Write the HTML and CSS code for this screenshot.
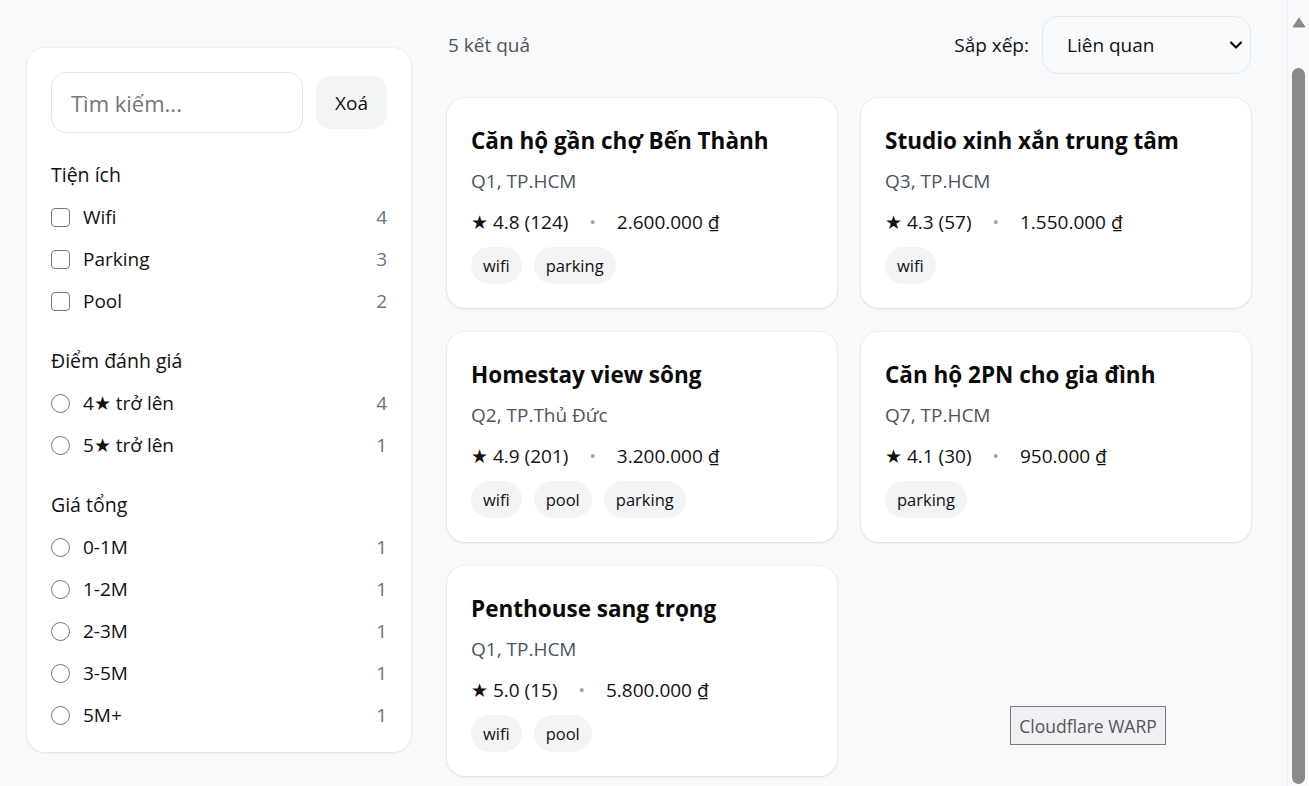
FILE: index.html
```html
<!DOCTYPE html>
<html lang="vi">
<head>
<meta charset="utf-8">
<title>Tìm chỗ ở</title>
<link rel="stylesheet" href="styles.css">
</head>
<body>
<div class="page">
  <aside class="sidebar">
    <div class="search-row">
      <input class="search" type="text" placeholder="Tìm kiếm...">
      <button class="clear">Xoá</button>
    </div>
    <section class="group">
      <h3 class="group-title">Tiện ích</h3>
      <label class="opt"><span class="box"></span><span class="opt-label">Wifi</span><span class="count">4</span></label>
      <label class="opt"><span class="box"></span><span class="opt-label">Parking</span><span class="count">3</span></label>
      <label class="opt"><span class="box"></span><span class="opt-label">Pool</span><span class="count">2</span></label>
    </section>
    <section class="group">
      <h3 class="group-title">Điểm đánh giá</h3>
      <label class="opt"><span class="radio"></span><span class="opt-label">4★ trở lên</span><span class="count">4</span></label>
      <label class="opt"><span class="radio"></span><span class="opt-label">5★ trở lên</span><span class="count">1</span></label>
    </section>
    <section class="group">
      <h3 class="group-title">Giá tổng</h3>
      <label class="opt"><span class="radio"></span><span class="opt-label">0-1M</span><span class="count">1</span></label>
      <label class="opt"><span class="radio"></span><span class="opt-label">1-2M</span><span class="count">1</span></label>
      <label class="opt"><span class="radio"></span><span class="opt-label">2-3M</span><span class="count">1</span></label>
      <label class="opt"><span class="radio"></span><span class="opt-label">3-5M</span><span class="count">1</span></label>
      <label class="opt"><span class="radio"></span><span class="opt-label">5M+</span><span class="count">1</span></label>
    </section>
  </aside>

  <main class="main">
    <div class="toolbar">
      <span class="result-count">5 kết quả</span>
      <div class="sort">
        <span class="sort-label">Sắp xếp:</span>
        <div class="select">
          <span>Liên quan</span>
          <svg class="chev" width="14" height="10" viewBox="0 0 14 10"><path d="M2 2.5 L7 7.5 L12 2.5" fill="none" stroke="#111" stroke-width="2.2" stroke-linecap="round" stroke-linejoin="round"/></svg>
        </div>
      </div>
    </div>

    <div class="grid">
      <article class="card">
        <h2 class="title">Căn hộ gần chợ Bến Thành</h2>
        <div class="loc">Q1, TP.HCM</div>
        <div class="meta"><span>★ 4.8 (124)</span><span class="dot">•</span><span>2.600.000 ₫</span></div>
        <div class="tags"><span class="tag">wifi</span><span class="tag">parking</span></div>
      </article>
      <article class="card">
        <h2 class="title">Studio xinh xắn trung tâm</h2>
        <div class="loc">Q3, TP.HCM</div>
        <div class="meta"><span>★ 4.3 (57)</span><span class="dot">•</span><span>1.550.000 ₫</span></div>
        <div class="tags"><span class="tag">wifi</span></div>
      </article>
      <article class="card">
        <h2 class="title">Homestay view sông</h2>
        <div class="loc">Q2, TP.Thủ Đức</div>
        <div class="meta"><span>★ 4.9 (201)</span><span class="dot">•</span><span>3.200.000 ₫</span></div>
        <div class="tags"><span class="tag">wifi</span><span class="tag">pool</span><span class="tag">parking</span></div>
      </article>
      <article class="card">
        <h2 class="title">Căn hộ 2PN cho gia đình</h2>
        <div class="loc">Q7, TP.HCM</div>
        <div class="meta"><span>★ 4.1 (30)</span><span class="dot">•</span><span>950.000 ₫</span></div>
        <div class="tags"><span class="tag">parking</span></div>
      </article>
      <article class="card">
        <h2 class="title">Penthouse sang trọng</h2>
        <div class="loc">Q1, TP.HCM</div>
        <div class="meta"><span>★ 5.0 (15)</span><span class="dot">•</span><span>5.800.000 ₫</span></div>
        <div class="tags"><span class="tag">wifi</span><span class="tag">pool</span></div>
      </article>
    </div>
  </main>
</div>
<div class="warp">Cloudflare WARP</div>
<div class="fake-scrollbar" aria-hidden="true">
  <svg class="scroll-arrow" width="14" height="11" viewBox="0 0 14 11"><path d="M7 1 L13 10 L1 10 Z" fill="#8a8a8a" stroke="#8a8a8a" stroke-width="1" stroke-linejoin="round"/></svg>
  <div class="scroll-thumb"></div>
</div>
</body>
</html>
```

FILE: styles.css
```css
body {
  margin: 0;
  background: #f8f9fb;
  font-family: "Open Sans", "Noto Sans", sans-serif;
  font-size: 19px;
  color: #111;
}
.page {
  display: grid;
  grid-template-columns: 384px 804px;
  column-gap: 36px;
  align-items: start;
  padding: 16px 0 24px 27px;
}
.sidebar {
  margin-top: 32px;
  background: #fff;
  border-radius: 18px;
  box-shadow: 0 1px 3px rgba(15, 23, 42, 0.08), 0 0 0 1px rgba(15, 23, 42, 0.03);
  padding: 24px 24px 23px;
}
.search-row {
  display: flex;
  align-items: center;
  gap: 13px;
  margin-bottom: 28px;
}
.search {
  width: 252px;
  height: 61px;
  box-sizing: border-box;
  border: 1px solid #e2e8f0;
  border-radius: 15px;
  padding: 0 19px;
  font: inherit;
  font-size: 22px;
  color: #111;
  outline: none;
  background: #fff;
}
.search::placeholder {
  color: #757575;
}
.clear {
  width: 71px;
  height: 53px;
  border: none;
  border-radius: 15px;
  background: #f3f4f6;
  font: inherit;
  font-size: 19px;
  color: #111;
  padding: 0;
}
.group {
  display: flex;
  flex-direction: column;
  gap: 14px;
}
.group + .group {
  margin-top: 32px;
}
.group-title {
  margin: 0;
  font-size: 19.5px;
  font-weight: 400;
  line-height: 28px;
}
.opt {
  display: flex;
  align-items: center;
  height: 28px;
}
.box,
.radio {
  width: 19px;
  height: 19px;
  box-sizing: border-box;
  border: 1.6px solid #767676;
  margin-right: 13px;
  flex: none;
}
.box {
  border-radius: 4px;
}
.radio {
  border-radius: 50%;
}
.opt-label {
  flex: 1;
}
.count {
  color: #6b7280;
}
.main {
  display: flex;
  flex-direction: column;
  gap: 24px;
}
.toolbar {
  display: flex;
  align-items: center;
  justify-content: space-between;
  height: 58px;
}
.result-count {
  color: #4b5563;
  padding-left: 1px;
}
.sort {
  display: flex;
  align-items: center;
  gap: 13px;
}
.select {
  width: 209px;
  height: 58px;
  box-sizing: border-box;
  border: 1px solid #e2e8f0;
  border-radius: 16px;
  background: #f8fafc;
  display: flex;
  align-items: center;
  justify-content: space-between;
  padding: 0 7px 0 24px;
}
.grid {
  display: grid;
  grid-template-columns: 390px 390px;
  gap: 24px;
}
.card {
  background: #fff;
  border-radius: 18px;
  box-shadow: 0 1px 3px rgba(15, 23, 42, 0.1), 0 0 0 1px rgba(15, 23, 42, 0.03);
  padding: 24px;
  height: 210px;
  box-sizing: border-box;
}
.title {
  margin: 0;
  font-size: 22.5px;
  font-weight: 700;
  line-height: 38px;
  color: #0a0a0a;
}
.loc {
  margin-top: 6px;
  color: #4b5563;
  line-height: 30px;
}
.meta {
  margin-top: 11px;
  line-height: 30px;
  display: flex;
  gap: 21px;
  align-items: center;
}
.dot {
  color: #9ca3af;
  font-size: 17px;
}
.tags {
  margin-top: 10px;
  display: flex;
  gap: 12px;
}
.tag {
  background: #f3f4f6;
  border-radius: 999px;
  height: 37px;
  line-height: 37px;
  padding: 0 12px;
  font-size: 16.5px;
}
.warp {
  position: fixed;
  left: 1010px;
  top: 706px;
  width: 156px;
  height: 39px;
  box-sizing: border-box;
  border: 1px solid #7a7a7a;
  background: #f0f1f5;
  color: #555;
  font-size: 17.5px;
  display: flex;
  align-items: center;
  justify-content: center;
}
.fake-scrollbar {
  position: fixed;
  top: 0;
  right: 0;
  bottom: 0;
  width: 21px;
  background: #f8f9fb;
  border-left: 1px solid #eef0f3;
}
.scroll-arrow {
  position: absolute;
  left: 4px;
  top: 17px;
}
.scroll-thumb {
  position: absolute;
  left: 4px;
  width: 13px;
  top: 68px;
  bottom: 2px;
  background: #8a8a8a;
  border-radius: 7px;
}
```
